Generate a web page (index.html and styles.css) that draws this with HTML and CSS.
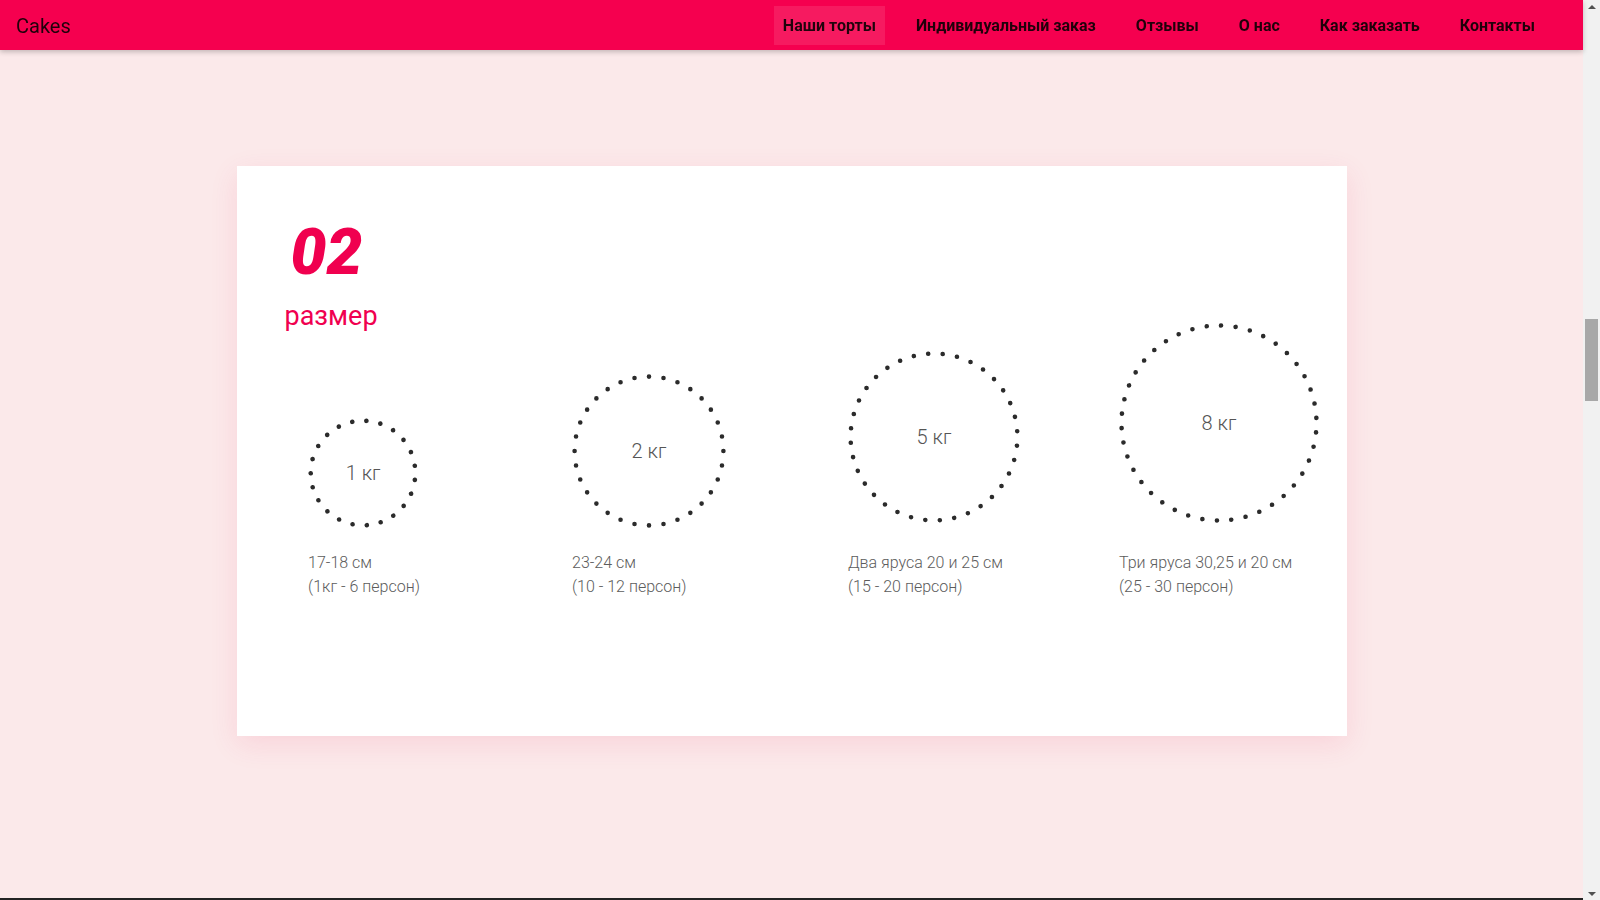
FILE: index.html
```html
<!DOCTYPE html>
<html lang="ru">
<head>
<meta charset="utf-8">
<title>Cakes — размер</title>
<link rel="stylesheet" href="styles.css">
</head>
<body>
<div class="page">
  <header class="navbar">
    <a class="brand" href="#">Cakes</a>
    <nav class="menu">
      <a class="menu-item active" href="#">Наши торты</a>
      <a class="menu-item" href="#">Индивидуальный заказ</a>
      <a class="menu-item" href="#">Отзывы</a>
      <a class="menu-item" href="#">О нас</a>
      <a class="menu-item" href="#">Как заказать</a>
      <a class="menu-item" href="#">Контакты</a>
    </nav>
  </header>

  <main>
    <section class="step">
      <div class="container">
        <div class="card">
          <div class="card-head">
            <div class="step-num">02</div>
            <h2 class="step-title">размер</h2>
          </div>
          <div class="sizes">
            <div class="size">
              <div class="size-item">
                <div class="ring ring-1">
                  <svg viewBox="0 0 110 110" width="110" height="110"><circle cx="55" cy="55" r="52.3" pathLength="23" transform="rotate(-8 55 55)"/></svg>
                  <span class="ring-label">1 кг</span>
                </div>
                <p class="size-desc">17-18 см<br>(1кг - 6 персон)</p>
              </div>
            </div>
            <div class="size">
              <div class="size-item">
                <div class="ring ring-2">
                  <svg viewBox="0 0 154 154" width="154" height="154"><circle cx="77" cy="77" r="74.4" pathLength="32" transform="rotate(0 77 77)"/></svg>
                  <span class="ring-label">2 кг</span>
                </div>
                <p class="size-desc">23-24 см<br>(10 - 12 персон)</p>
              </div>
            </div>
            <div class="size">
              <div class="size-item">
                <div class="ring ring-3">
                  <svg viewBox="0 0 172 172" width="172" height="172"><circle cx="86" cy="86" r="83.4" pathLength="36" transform="rotate(-4 86 86)"/></svg>
                  <span class="ring-label">5 кг</span>
                </div>
                <p class="size-desc">Два яруса 20 и 25 см<br>(15 - 20 персон)</p>
              </div>
            </div>
            <div class="size">
              <div class="size-item">
                <div class="ring ring-4">
                  <svg viewBox="0 0 200 200" width="200" height="200"><circle cx="100" cy="100" r="97.5" pathLength="42" transform="rotate(-3 100 100)"/></svg>
                  <span class="ring-label">8 кг</span>
                </div>
                <p class="size-desc">Три яруса 30,25 и 20 см<br>(25 - 30 персон)</p>
              </div>
            </div>
          </div>
        </div>
      </div>
    </section>
    <section class="next-step"></section>
  </main>
</div>

<div class="scrollbar" aria-hidden="true">
  <div class="sb-btn sb-up"></div>
  <div class="sb-track"><div class="sb-thumb"></div></div>
  <div class="sb-btn sb-down"></div>
</div>
</body>
</html>
```

FILE: styles.css
```css
*, *::before, *::after {
  box-sizing: border-box;
}

body {
  margin: 0;
  display: flex;
  align-items: flex-start;
  background: #fbe9ea;
  font-family: Roboto, "Noto Sans", "Liberation Sans", sans-serif;
  color: #555;
}

.page {
  flex: 1;
  min-width: 0;
}

/* ---------- fake window scrollbar ---------- */
.scrollbar {
  position: sticky;
  top: 0;
  flex: none;
  width: 17px;
  height: 100vh;
  display: flex;
  flex-direction: column;
  background: #f1f1f1;
}

.sb-btn {
  height: 17px;
  display: flex;
  align-items: center;
  justify-content: center;
}

.sb-btn::before {
  content: "";
  border-left: 4px solid transparent;
  border-right: 4px solid transparent;
}

.sb-up::before {
  border-bottom: 4px solid #505050;
  margin-top: -4px;
}

.sb-down::before {
  border-top: 4px solid #505050;
  margin-bottom: -4px;
}

.sb-track {
  flex: 1;
  padding: 302px 2px 0;
}

.sb-thumb {
  height: 82px;
  background: #a8a8a8;
}

/* ---------- navbar ---------- */
.navbar {
  position: fixed;
  top: 0;
  left: 0;
  right: 17px;
  z-index: 10;
  height: 50px;
  display: flex;
  align-items: center;
  justify-content: space-between;
  padding: 0 39px 0 16px;
  background: #f5004f;
  box-shadow: 0 2px 5px rgba(0, 0, 0, 0.22);
}

.brand {
  font-size: 20px;
  color: rgba(0, 0, 0, 0.87);
  text-decoration: none;
  line-height: 1;
  margin-top: 1px;
}

.menu {
  display: flex;
  gap: 22px;
  align-items: center;
}

.menu-item {
  display: block;
  padding: 10px 9px;
  line-height: 19px;
  font-size: 16px;
  font-weight: 700;
  color: rgba(0, 0, 0, 0.87);
  text-decoration: none;
  white-space: nowrap;
}

.menu-item.active {
  background: rgba(255, 255, 255, 0.1);
}

/* ---------- section ---------- */
.step {
  padding: 166px 0 162px;
}

.container {
  max-width: 1140px;
  margin: 0 auto;
  padding: 0 15px;
}

.card {
  background: #fff;
  height: 570px;
  padding-top: 55px;
  box-shadow: 0 8px 26px rgba(240, 60, 110, 0.12);
}

.card-head {
  padding: 0 48px;
}

.step-num {
  font-size: 64px;
  line-height: 64px;
  font-weight: 900;
  font-style: italic;
  color: #f0004f;
  padding-left: 6px;
}

.step-title {
  margin: 14px 0 0;
  font-size: 27px;
  line-height: 34px;
  font-weight: 400;
  color: #f0004f;
}

/* ---------- sizes ---------- */
.sizes {
  display: grid;
  grid-template-columns: repeat(4, 1fr);
  margin: -10px -15px 0;
}

.size {
  display: flex;
  justify-content: center;
}

.size-item {
  display: flex;
  flex-direction: column;
  justify-content: flex-end;
}

.ring {
  display: grid;
  place-items: center;
}

.ring > * {
  grid-area: 1 / 1;
}

.ring svg {
  display: block;
}

.ring circle {
  fill: none;
  stroke: #2b2b2b;
  stroke-width: 4.6;
  stroke-linecap: round;
  stroke-dasharray: 0 1;
}

.ring-label {
  font-size: 20px;
  font-weight: 300;
  color: #555;
  line-height: 1;
}

.ring-1 { width: 110px; }
.ring-2 { width: 154px; }
.ring-3 { width: 172px; margin-bottom: 5px; }
.ring-4 { width: 200px; margin-bottom: 5px; }

.size-desc {
  margin: 23px 0 0;
  font-size: 16px;
  line-height: 24px;
  font-weight: 300;
  color: #5c5c5c;
  white-space: nowrap;
}

.next-step {
  height: 400px;
  background: #232323;
}
```
